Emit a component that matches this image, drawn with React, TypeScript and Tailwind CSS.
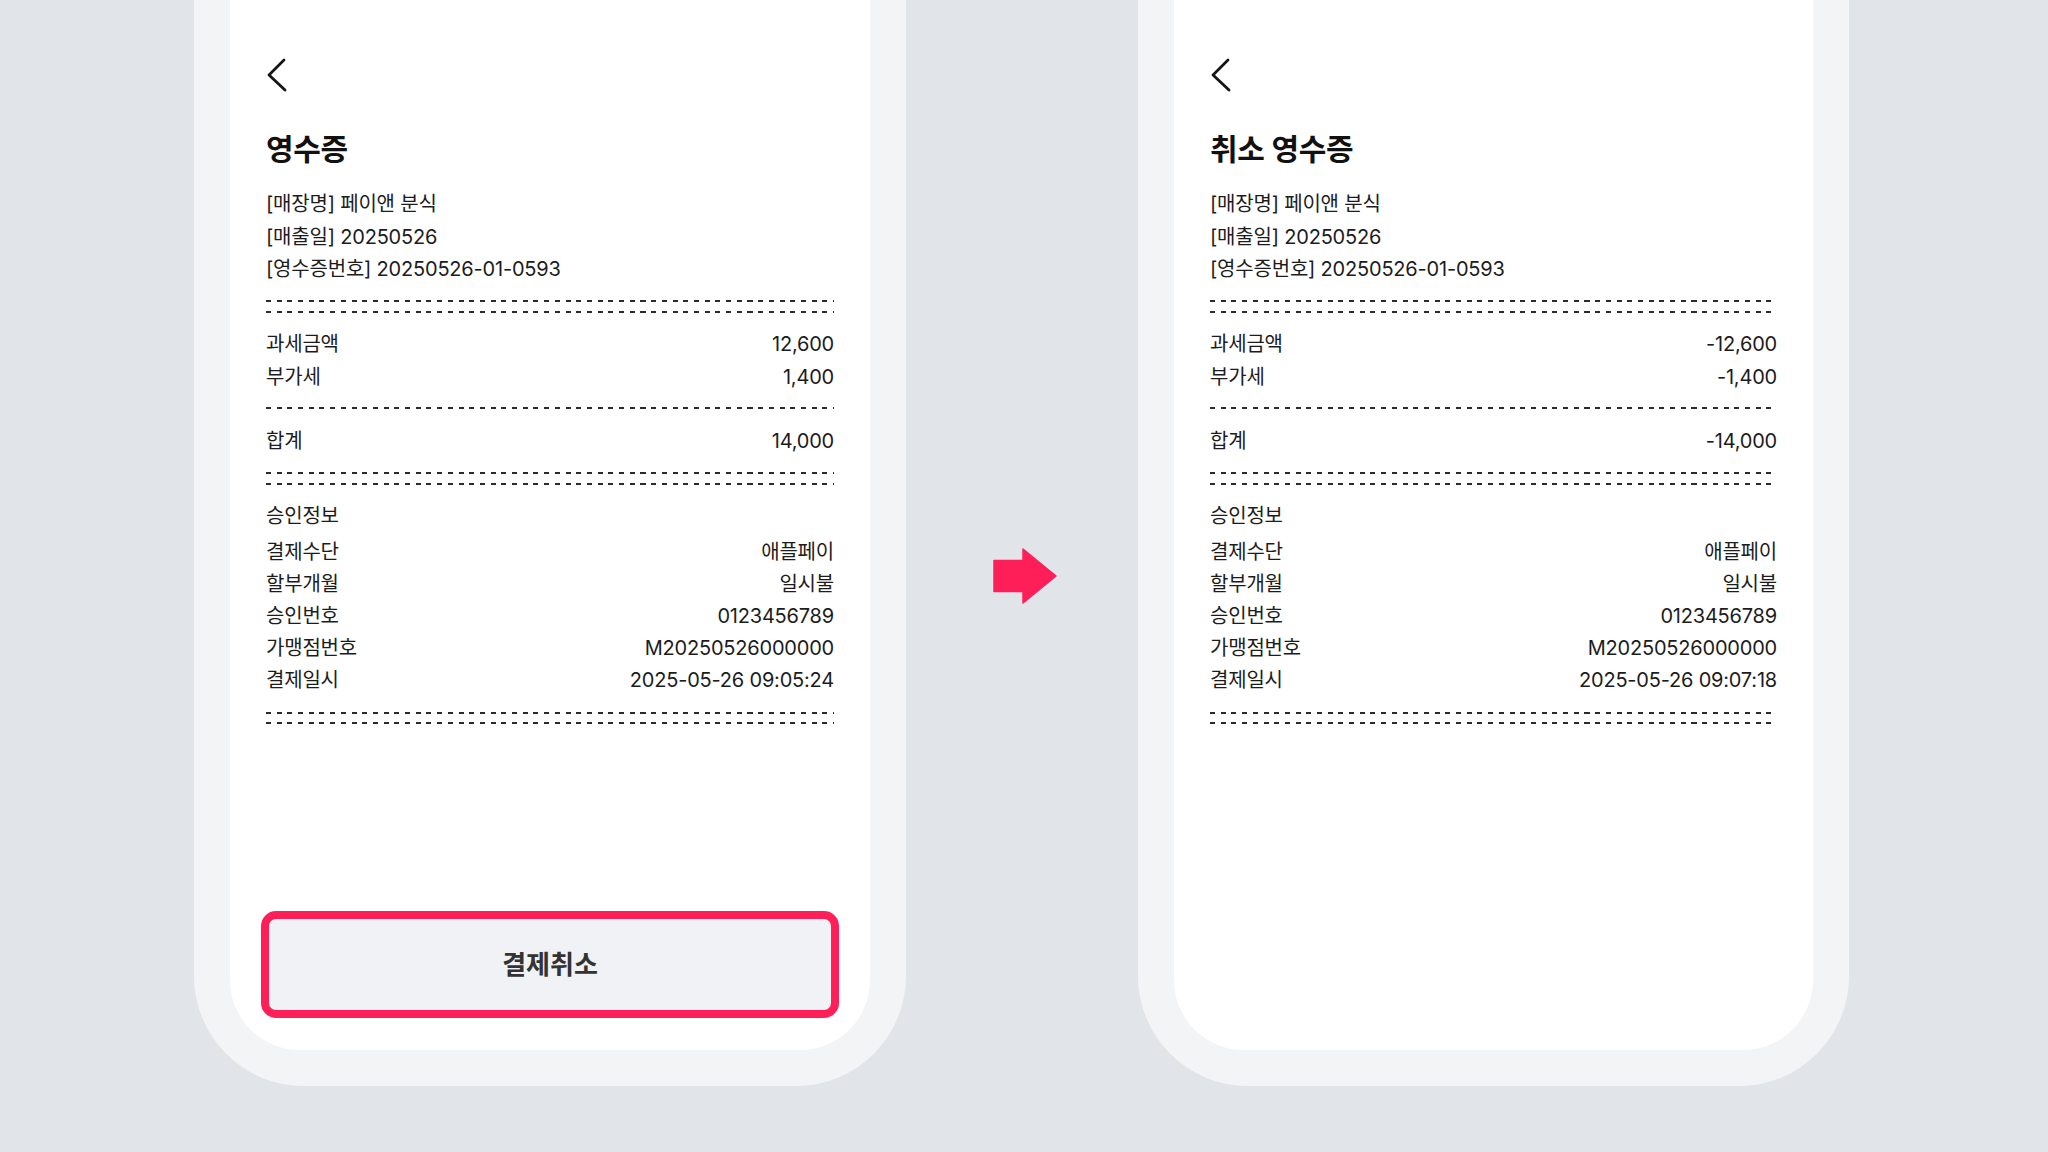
type Row = { label: string; value: string };

const font = { fontFamily: 'Inter, "Noto Sans CJK KR", sans-serif' };

function Dash({ className = "" }: { className?: string }) {
  return (
    <div
      className={`h-[2px] w-full bg-[repeating-linear-gradient(to_right,#2a2a2a_0_5px,transparent_5px_10.7px)] ${className}`}
    />
  );
}

function Rows({ rows, lh }: { rows: Row[]; lh: string }) {
  return (
    <div className={`flex flex-col text-[20px] tracking-[-0.2px] text-[#1c1c1c] ${lh}`}>
      {rows.map((r) => (
        <div key={r.label} className="flex justify-between">
          <span>{r.label}</span>
          <span>{r.value}</span>
        </div>
      ))}
    </div>
  );
}

function BackIcon() {
  return (
    <svg width="24" height="40" viewBox="0 0 24 40" className="mt-[55px] block">
      <polyline
        points="18,5 3,20 19,35"
        fill="none"
        stroke="#141414"
        strokeWidth="2.8"
        strokeLinecap="round"
        strokeLinejoin="round"
      />
    </svg>
  );
}

type Receipt = {
  title: string;
  tax: string;
  vat: string;
  total: string;
  paidAt: string;
  withButton?: boolean;
};

function Phone({ data, width }: { data: Receipt; width: string }) {
  return (
    <div className={`${width} h-[1086px] shrink-0 rounded-b-[110px] bg-[#f3f4f6] px-[36px] pb-[36px]`}>
      <div className="flex h-full flex-col rounded-b-[70px] bg-white px-[36px]" style={font}>
        <BackIcon />
        <h1 className="mt-[36px] text-[30px] font-bold leading-[36px] tracking-[-0.3px] text-[#111]">
          {data.title}
        </h1>

        <div className="mt-[21px] flex flex-col text-[20px] leading-[32.5px] tracking-[-0.2px] text-[#1c1c1c]">
          <span>[매장명] 페이앤 분식</span>
          <span>[매출일] 20250526</span>
          <span>[영수증번호] 20250526-01-0593</span>
        </div>

        <Dash className="mt-[14px]" />
        <Dash className="mt-[9px]" />

        <div className="mt-[15.5px]">
          <Rows
            lh="leading-[32.5px]"
            rows={[
              { label: "과세금액", value: data.tax },
              { label: "부가세", value: data.vat },
            ]}
          />
        </div>

        <Dash className="mt-[14px]" />

        <div className="mt-[16px]">
          <Rows lh="leading-[32.5px]" rows={[{ label: "합계", value: data.total }]} />
        </div>

        <Dash className="mt-[14px]" />
        <Dash className="mt-[9px]" />

        <div className="mt-[15px] text-[20px] leading-[32.5px] tracking-[-0.2px] text-[#1c1c1c]">승인정보</div>
        <div className="mt-[3.5px]">
          <Rows
            lh="leading-[32px]"
            rows={[
              { label: "결제수단", value: "애플페이" },
              { label: "할부개월", value: "일시불" },
              { label: "승인번호", value: "0123456789" },
              { label: "가맹점번호", value: "M20250526000000" },
              { label: "결제일시", value: data.paidAt },
            ]}
          />
        </div>

        <Dash className="mt-[16.5px]" />
        <Dash className="mt-[8px]" />

        {data.withButton && (
          <button className="-mx-[5px] mt-auto mb-[32px] flex h-[107px] items-center justify-center rounded-[15px] border-[8px] border-[#ff1f58] bg-[#f0f2f5] text-[26px] font-bold text-[#333]">
            결제취소
          </button>
        )}
      </div>
    </div>
  );
}

function Arrow() {
  return (
    <svg width="64" height="56" viewBox="0 0 64 56">
      <path
        d="M1 12.5 H30 V1 L63 28 L30 55 V43.5 H1 Z"
        fill="#ff1f58"
        stroke="#ff1f58"
        strokeWidth="1.5"
        strokeLinejoin="round"
      />
    </svg>
  );
}

export default function App() {
  return (
    <div className="flex h-[1152px] w-full items-start overflow-hidden bg-[#e1e5ea] pl-[194px]">
      <Phone
        width="w-[712px]"
        data={{
          title: "영수증",
          tax: "12,600",
          vat: "1,400",
          total: "14,000",
          paidAt: "2025-05-26 09:05:24",
          withButton: true,
        }}
      />
      <div className="flex w-[232px] shrink-0 items-center justify-center self-stretch pl-[5px]">
        <Arrow />
      </div>
      <Phone
        width="w-[711px]"
        data={{
          title: "취소 영수증",
          tax: "-12,600",
          vat: "-1,400",
          total: "-14,000",
          paidAt: "2025-05-26 09:07:18",
        }}
      />
    </div>
  );
}
